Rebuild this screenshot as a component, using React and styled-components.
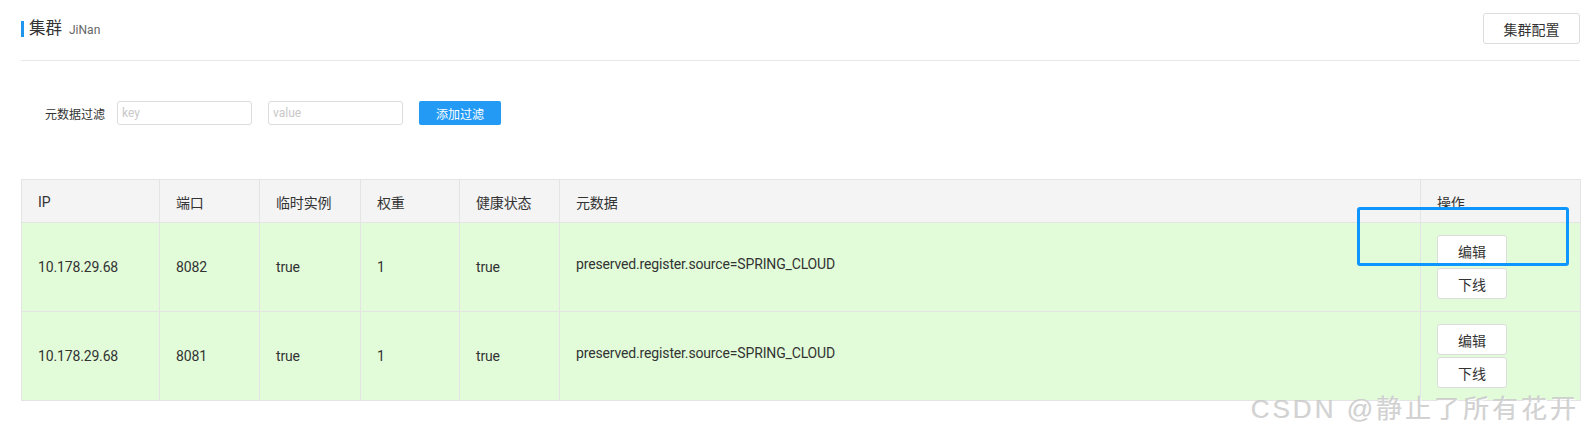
import styled, { createGlobalStyle } from 'styled-components';

const GlobalStyle = createGlobalStyle`
   html, body {
      margin: 0;
      padding: 0;
      background: #fff;
   }
   body {
      font-family: Roboto, "Noto Sans CJK SC", sans-serif;
      color: #333;
   }
`;

const instances = [
   { ip: '10.178.29.68', port: 8082, ephemeral: 'true', weight: 1, healthy: 'true', meta: 'preserved.register.source=SPRING_CLOUD' },
   { ip: '10.178.29.68', port: 8081, ephemeral: 'true', weight: 1, healthy: 'true', meta: 'preserved.register.source=SPRING_CLOUD' },
];

const columns = [
   { title: 'IP', width: 138 },
   { title: '端口', width: 100 },
   { title: '临时实例', width: 101 },
   { title: '权重', width: 99 },
   { title: '健康状态', width: 100 },
   { title: '元数据', width: 861 },
   { title: '操作', width: 160 },
];

export default function App() {
   return (
      <>
         <GlobalStyle />
         <Page>
            <Header>
               <Title>
                  <TitleBar />
                  <TitleText>集群</TitleText>
                  <SubTitle>JiNan</SubTitle>
               </Title>
               <PlainButton $h={31} $w={97}>集群配置</PlainButton>
            </Header>

            <FilterRow>
               <FilterLabel>元数据过滤</FilterLabel>
               <FilterInput placeholder='key' />
               <FilterInput placeholder='value' />
               <PrimaryButton>添加过滤</PrimaryButton>
            </FilterRow>

            <Table>
               <colgroup>
                  {columns.map((c) => (
                     <col key={c.title} style={{ width: c.width }} />
                  ))}
               </colgroup>
               <thead>
                  <tr>
                     {columns.map((c) => (
                        <Th key={c.title}>{c.title}</Th>
                     ))}
                  </tr>
               </thead>
               <tbody>
                  {instances.map((row) => (
                     <Tr key={row.port}>
                        <Td>{row.ip}</Td>
                        <Td>{row.port}</Td>
                        <Td>{row.ephemeral}</Td>
                        <Td>{row.weight}</Td>
                        <Td>{row.healthy}</Td>
                        <Td $lift>{row.meta}</Td>
                        <Td>
                           <Actions>
                              <PlainButton $h={31} $w={70}>编辑</PlainButton>
                              <PlainButton $h={31} $w={70}>下线</PlainButton>
                           </Actions>
                        </Td>
                     </Tr>
                  ))}
               </tbody>
            </Table>

            <Highlight />
            <Watermark>CSDN @静止了所有花开</Watermark>
         </Page>
      </>
   );
}

const Page = styled.div`
   position: relative;
   height: 438px;
   padding: 0 5px 0 21px;
   box-sizing: border-box;
   overflow: hidden;
`;

const Header = styled.div`
   display: flex;
   align-items: center;
   justify-content: space-between;
   padding: 13px 0 16px;
   border-bottom: 1px solid #e8e8e8;
`;

const Title = styled.div`
   display: flex;
   align-items: center;
`;

const TitleBar = styled.span`
   width: 3px;
   height: 16px;
   background: #1f95f0;
   margin-right: 5px;
`;

const TitleText = styled.span`
   font-size: 16.5px;
   line-height: 20px;
   color: #333;
   margin-right: 7px;
`;

const SubTitle = styled.span`
   font-size: 12px;
   line-height: 16px;
   color: #666;
   margin-top: 2px;
`;

const PlainButton = styled.button`
   width: ${(p) => p.$w}px;
   height: ${(p) => p.$h}px;
   padding: 0;
   border: 1px solid #dcdcdc;
   border-radius: 3px;
   background: #fff;
   font-family: Roboto, "Noto Sans CJK SC", sans-serif;
   font-size: 14px;
   color: #333;
   cursor: pointer;
`;

const FilterRow = styled.div`
   display: flex;
   align-items: center;
   gap: 16px;
   margin-top: 40px;
   padding-left: 24px;
`;

const FilterLabel = styled.label`
   font-size: 12px;
   color: #333;
   margin-right: -4px;
`;

const FilterInput = styled.input`
   width: 135px;
   height: 24px;
   box-sizing: border-box;
   padding: 0 4px;
   border: 1px solid #dcdcdc;
   border-radius: 3px;
   font-family: Roboto, sans-serif;
   font-size: 12px;
   outline: none;
   &::placeholder {
      color: #c8c8c8;
   }
`;

const PrimaryButton = styled.button`
   width: 82px;
   height: 24px;
   padding: 0;
   border: none;
   border-radius: 2px;
   background: #239bf5;
   color: #fff;
   font-family: Roboto, "Noto Sans CJK SC", sans-serif;
   font-size: 12px;
   cursor: pointer;
`;

const Table = styled.table`
   width: 1559px;
   margin-top: 54px;
   table-layout: fixed;
   border-collapse: collapse;
   border: 1px solid #e4e4e4;
   font-size: 14px;
   letter-spacing: -0.15px;
`;

const Th = styled.th`
   height: 40px;
   padding: 2px 0 0 16px;
   background: #f4f4f4;
   border: 1px solid #e4e4e4;
   text-align: left;
   font-weight: 400;
   color: #333;
`;

const Tr = styled.tr`
   background: #e2fcd9;
`;

const Td = styled.td`
   height: ${(p) => (p.$lift ? 81 : 88)}px;
   padding: 0 0 ${(p) => (p.$lift ? 7 : 0)}px 16px;
   border: 1px solid #e4e4e4;
   color: #333;
   vertical-align: middle;
   white-space: nowrap;
`;

const Actions = styled.div`
   display: flex;
   flex-direction: column;
   gap: 2px;
`;

const Highlight = styled.div`
   position: absolute;
   left: 1357px;
   top: 207px;
   width: 212px;
   height: 59px;
   box-sizing: border-box;
   border: 3px solid #0d96ff;
   border-radius: 3px;
   pointer-events: none;
`;

const Watermark = styled.div`
   position: absolute;
   left: 1251px;
   top: 394px;
   font-family: "Liberation Sans", "Noto Sans CJK SC", sans-serif;
   font-size: 26px;
   line-height: 30px;
   letter-spacing: 3px;
   white-space: nowrap;
   color: rgba(205, 205, 205, 0.85);
   text-shadow: 1px 1px 0 rgba(255, 255, 255, 0.9), -0.5px -0.5px 0 rgba(170, 170, 170, 0.4);
   pointer-events: none;
`;
